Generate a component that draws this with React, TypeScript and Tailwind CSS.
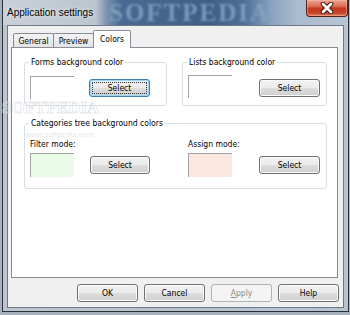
import React from "react";

const FONT = "font-['DejaVu_Sans_Condensed','Liberation_Sans',sans-serif] text-[8.5px] leading-[12px] text-black";

function Btn({
  children,
  className,
  focused,
  disabled,
}: {
  children: React.ReactNode;
  className: string;
  focused?: boolean;
  disabled?: boolean;
}) {
  const look = disabled
    ? "border-[#adb2b5] bg-[#f4f4f4] text-[#8a8a8a]"
    : focused
    ? "border-[#3c7fb1] bg-[linear-gradient(#f2f2f2_0%,#ebebeb_50%,#dddddd_50%,#cfcfcf_100%)] shadow-[inset_0_0_0_1px_#9ad6f2]"
    : "border-[#707070] bg-[linear-gradient(#f2f2f2_0%,#ebebeb_50%,#dddddd_50%,#cfcfcf_100%)] shadow-[inset_0_0_0_1px_#fbfbfb]";
  return (
    <div
      className={`relative flex h-[18px] shrink-0 items-center justify-center rounded-[3px] border ${look} ${className}`}
    >
      {focused && (
        <span className="pointer-events-none absolute inset-[2px] border border-dotted border-[#333]" />
      )}
      <span>{children}</span>
    </div>
  );
}

function Swatch({ className }: { className: string }) {
  return (
    <div
      className={`w-[44px] shrink-0 border-l border-t border-[#a3a3a3] ${className}`}
    />
  );
}

export default function App() {
  return (
    <div
      className={`relative flex h-[315px] w-[350px] overflow-hidden bg-[#a7b1bb] pb-[3px] pl-[2px] pr-[1px] ${FONT}`}
    >
      <div className="flex h-[312px] w-[347px] flex-col border-x border-b border-[#29323c] bg-[linear-gradient(90deg,#bcc4cd_0%,#b8c2cc_50%,#b6c3d0_100%)]">
        {/* title bar */}
        <div className="relative flex h-[25px] shrink-0 items-start justify-between bg-[linear-gradient(90deg,#c9d0d8_0%,#bcc5cf_27%,#7a93b1_30%,#4a6a92_34%,#3f5f88_60%,#4f6f97_70%,#8aa3c0_78%,#a9bbce_85%,#b7c6d5_100%)]">
          <span className="pointer-events-none absolute left-[106px] top-[0px] select-none font-['Liberation_Serif',serif] text-[25px] font-bold leading-[25px] tracking-[2px] text-[#89a6c6] opacity-80 blur-[1px]">
            SOFTPEDIA
          </span>
          <span className="relative pl-[4px] pt-[7px] font-['Liberation_Sans',sans-serif] text-[10px] leading-[12px] text-black [text-shadow:0_0_4px_#ffffff]">
            Application settings
          </span>
          <div className="relative flex h-[17px] w-[42px] items-center justify-center rounded-b-[4px] border border-t-0 border-[#5a1f16] bg-[linear-gradient(#eba593_0%,#d96a50_42%,#c4381c_50%,#c74327_78%,#dc7a5c_100%)] shadow-[inset_0_0_0_1px_rgba(255,190,170,0.5)]">
            <svg width="16" height="12" viewBox="0 0 16 12">
              <path d="M4 2 L12 10 M12 2 L4 10" stroke="#3f1008" strokeWidth="4.6" strokeLinecap="round" />
              <path d="M4 2 L12 10 M12 2 L4 10" stroke="#ffffff" strokeWidth="2.8" strokeLinecap="round" />
            </svg>
          </div>
        </div>

        {/* client area */}
        <div className="mx-[4px] flex h-[283px] shrink-0 flex-col border border-[#6d7987] bg-[#f0f0f0] pt-[4px]">
          {/* tabs */}
          <div className="ml-[5px] flex h-[17px] items-end">
            <div className="flex h-[14px] w-[41px] items-center justify-center rounded-t-[2px] border-x border-t border-[#898c95] bg-[linear-gradient(#f3f3f3,#e4e4e4)]">
              General
            </div>
            <div className="-ml-px flex h-[14px] w-[41px] items-center justify-center rounded-t-[2px] border-x border-t border-[#898c95] bg-[linear-gradient(#f3f3f3,#e4e4e4)]">
              Preview
            </div>
            <div className="relative z-10 -mb-px -ml-px flex h-[18px] w-[38px] items-start justify-center rounded-t-[2px] border-x border-t border-[#898c95] bg-white pt-[2px]">
              Colors
            </div>
          </div>

          {/* panel */}
          <div className="ml-[3px] flex h-[231px] w-[327px] flex-col border border-[#898c95] bg-white pl-[12px] pt-[8px]">
            <div className="flex">
              <fieldset className="h-[50px] w-[143px] rounded-[3px] border border-[#d5dfe5]">
                <legend className="ml-[4px] px-[2px] leading-[12px]">Forms background color</legend>
                <div className="mt-[8px] flex items-start pl-[5px]">
                  <Swatch className="h-[23px] bg-white" />
                  <Btn className="ml-[15px] mt-[3px] w-[61px]" focused>
                    Select
                  </Btn>
                </div>
              </fieldset>
              <fieldset className="ml-[15px] h-[50px] w-[145px] rounded-[3px] border border-[#d5dfe5]">
                <legend className="ml-[4px] px-[2px] leading-[12px]">Lists background color</legend>
                <div className="mt-[7px] flex items-start pl-[5px]">
                  <Swatch className="h-[23px] bg-white" />
                  <Btn className="ml-[27px] mt-[4px] w-[61px]">Select</Btn>
                </div>
              </fieldset>
            </div>

            <fieldset className="mt-[11px] h-[72px] w-[303px] rounded-[3px] border border-[#d5dfe5]">
              <legend className="ml-[4px] px-[2px] leading-[12px]">Categories tree background colors</legend>
              <div className="mt-[9px] flex">
                <div className="flex w-[163px] flex-col pl-[5px]">
                  <span>Filter mode:</span>
                  <div className="mt-[3px] flex items-start">
                    <Swatch className="h-[24px] bg-[#e9fae6]" />
                    <Btn className="ml-[16px] mt-[3px] w-[60px]">Select</Btn>
                  </div>
                </div>
                <div className="flex flex-col">
                  <span>Assign mode:</span>
                  <div className="mt-[3px] flex items-start">
                    <Swatch className="h-[24px] bg-[#fce8e1]" />
                    <Btn className="ml-[27px] mt-[3px] w-[61px]">Select</Btn>
                  </div>
                </div>
              </div>
            </fieldset>
          </div>

          {/* dialog buttons */}
          <div className="mt-[6px] flex justify-end gap-[6px] pr-[4px]">
            <Btn className="w-[61px]">OK</Btn>
            <Btn className="w-[61px]">Cancel</Btn>
            <Btn className="w-[61px]" disabled>
              <span className="underline">A</span>pply
            </Btn>
            <Btn className="w-[61px]">Help</Btn>
          </div>
        </div>
      </div>

      {/* faint watermark overlay */}
      <span className="pointer-events-none absolute left-[2px] top-[100px] select-none font-['Liberation_Serif',serif] text-[17px] font-bold leading-[16px] text-transparent opacity-60 [-webkit-text-stroke:1px_#d6dadf]">
        SOFTPEDIA
      </span>
      <span className="pointer-events-none absolute left-[25px] top-[130px] select-none font-['Liberation_Sans',sans-serif] text-[8px] leading-[9px] text-[#e6e9ec]">
        www.softpedia.com
      </span>
    </div>
  );
}
